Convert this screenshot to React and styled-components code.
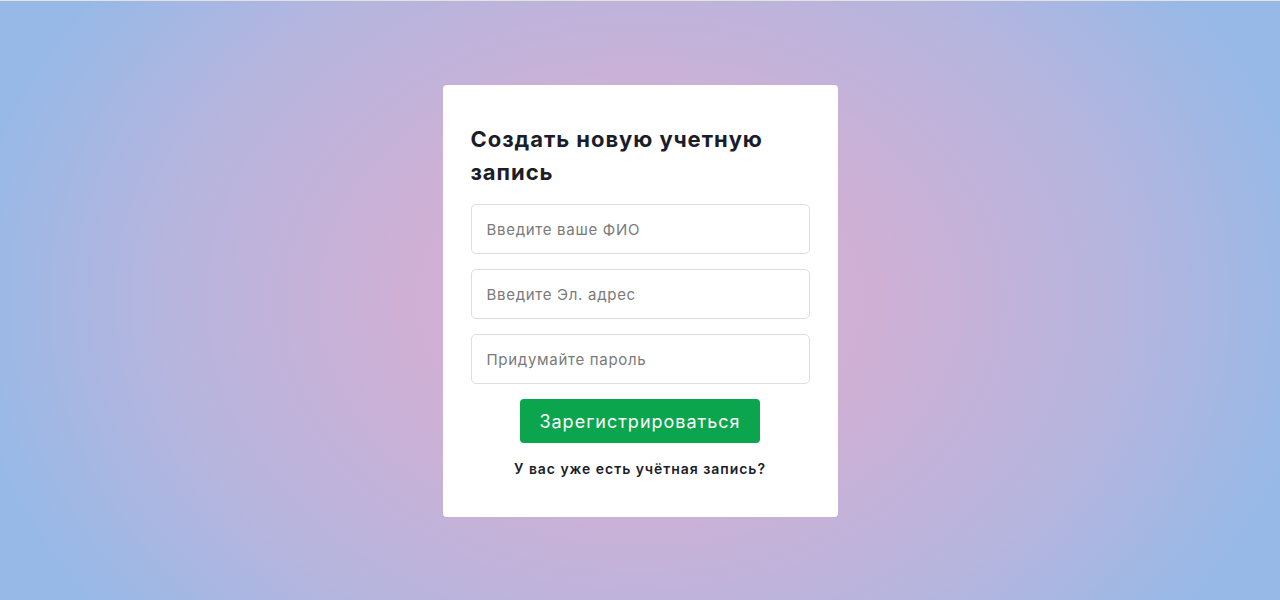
import React from "react";
import styled, { createGlobalStyle } from "styled-components";

const Global = createGlobalStyle`
  html, body { margin: 0; padding: 0; }
  body { font-family: "Inter", "Noto Sans", sans-serif; }
  * { box-sizing: border-box; }
`;

const Page = styled.div`
  width: 1280px;
  height: 600px;
  border-top: 1px solid #e2e2e2;
  background: radial-gradient(ellipse 680px 520px at 640px 300px, #d8afd2 0%, #cfb0d5 35%, #b6b5de 70%, #97b9e7 100%);
  display: flex;
  justify-content: center;
  padding-top: 84px;
`;

const Card = styled.form`
  width: 395px;
  height: 432px;
  background: #fff;
  border-radius: 4px;
  padding: 38px 28px 0;
  display: flex;
  flex-direction: column;
`;

const Title = styled.h1`
  margin: 0 0 15px;
  font-size: 22px;
  line-height: 33px;
  font-weight: 700;
  color: #1b1d2a;
  letter-spacing: 0.95px;
`;

const Fields = styled.div`
  display: flex;
  flex-direction: column;
  gap: 15px;
`;

const Input = styled.input`
  width: 339px;
  height: 50px;
  border: 1px solid #dedede;
  border-radius: 5px;
  padding: 0 15px;
  font-family: inherit;
  font-size: 15px;
  letter-spacing: 0.7px;
  color: #333;
  outline: none;
  &::placeholder { color: #7a7a7a; }
`;

const Button = styled.button`
  align-self: center;
  margin-top: 15px;
  width: 240px;
  height: 44px;
  border: none;
  border-radius: 4px;
  background: #0aa54c;
  color: #fff;
  font-family: inherit;
  font-size: 18px;
  font-weight: 400;
  letter-spacing: 1px;
  cursor: pointer;
`;

const Link = styled.a`
  align-self: center;
  margin-top: 17px;
  font-size: 14px;
  font-weight: 600;
  letter-spacing: 0.95px;
  color: #1b1d2a;
  text-decoration: none;
`;

export default function App() {
  return (
    <>
      <Global />
      <Page>
        <Card onSubmit={(e) => e.preventDefault()}>
          <Title>Создать новую учетную запись</Title>
          <Fields>
            <Input placeholder="Введите ваше ФИО" />
            <Input placeholder="Введите Эл. адрес" />
            <Input type="password" placeholder="Придумайте пароль" />
          </Fields>
          <Button type="submit">Зарегистрироваться</Button>
          <Link href="#">У вас уже есть учётная запись?</Link>
        </Card>
      </Page>
    </>
  );
}
